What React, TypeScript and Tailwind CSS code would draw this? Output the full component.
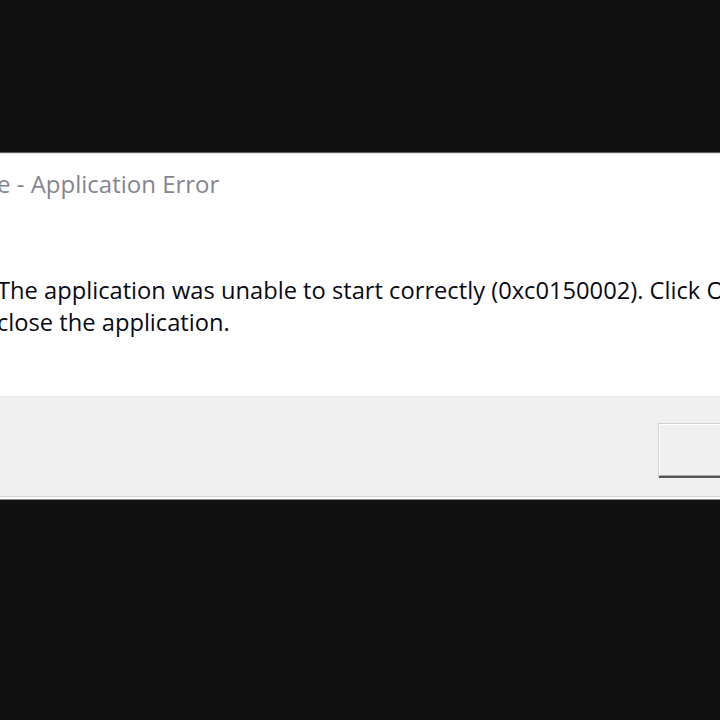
import React from "react";

export default function App() {
  return (
    <div className="w-[720px] h-[720px] bg-[#111111] overflow-hidden flex flex-col" style={{ fontFamily: '"Open Sans", "Noto Sans", sans-serif' }}>
      <div className="h-[152px] shrink-0" />
      <div className="h-[1px] bg-[#5a5a5a] shrink-0" />
      <div className="h-[1px] bg-[#e2e2e2] shrink-0" />
      <div className="h-[242px] shrink-0 bg-white flex flex-col">
        <div className="pt-[15px] -ml-[3px] text-[24px] leading-[30px] text-[#858590] whitespace-nowrap">e - Application Error</div>
        <div className="pt-[75px] -ml-[3px] text-[23.7px] leading-[32px] text-[#0a0a14] whitespace-nowrap">
          <div>The application was unable to start correctly (0xc0150002). Click OK to</div>
          <div>close the application.</div>
        </div>
      </div>
      <div className="h-[1px] bg-[#ebebeb] shrink-0" />
      <div className="h-[99px] shrink-0 bg-[#f0f0f0] flex items-start justify-end pt-[26px]">
        <div className="w-[100px] h-[55px] -mr-[38px] border border-[#d0d0d0] border-b-0 bg-[#f0f0f0] flex flex-col">
          <div className="flex-1 border border-white border-r-0 border-b-[#a8a8a8]" />
          <div className="h-[2px] bg-[#555555]" />
        </div>
      </div>
      <div className="h-[1px] bg-[#d6d6d6] shrink-0" />
      <div className="h-[2px] bg-[#fafafa] shrink-0" />
      <div className="h-[1px] bg-[#8a8a8a] shrink-0" />
      <div className="flex-1 bg-[#111111]" />
    </div>
  );
}
